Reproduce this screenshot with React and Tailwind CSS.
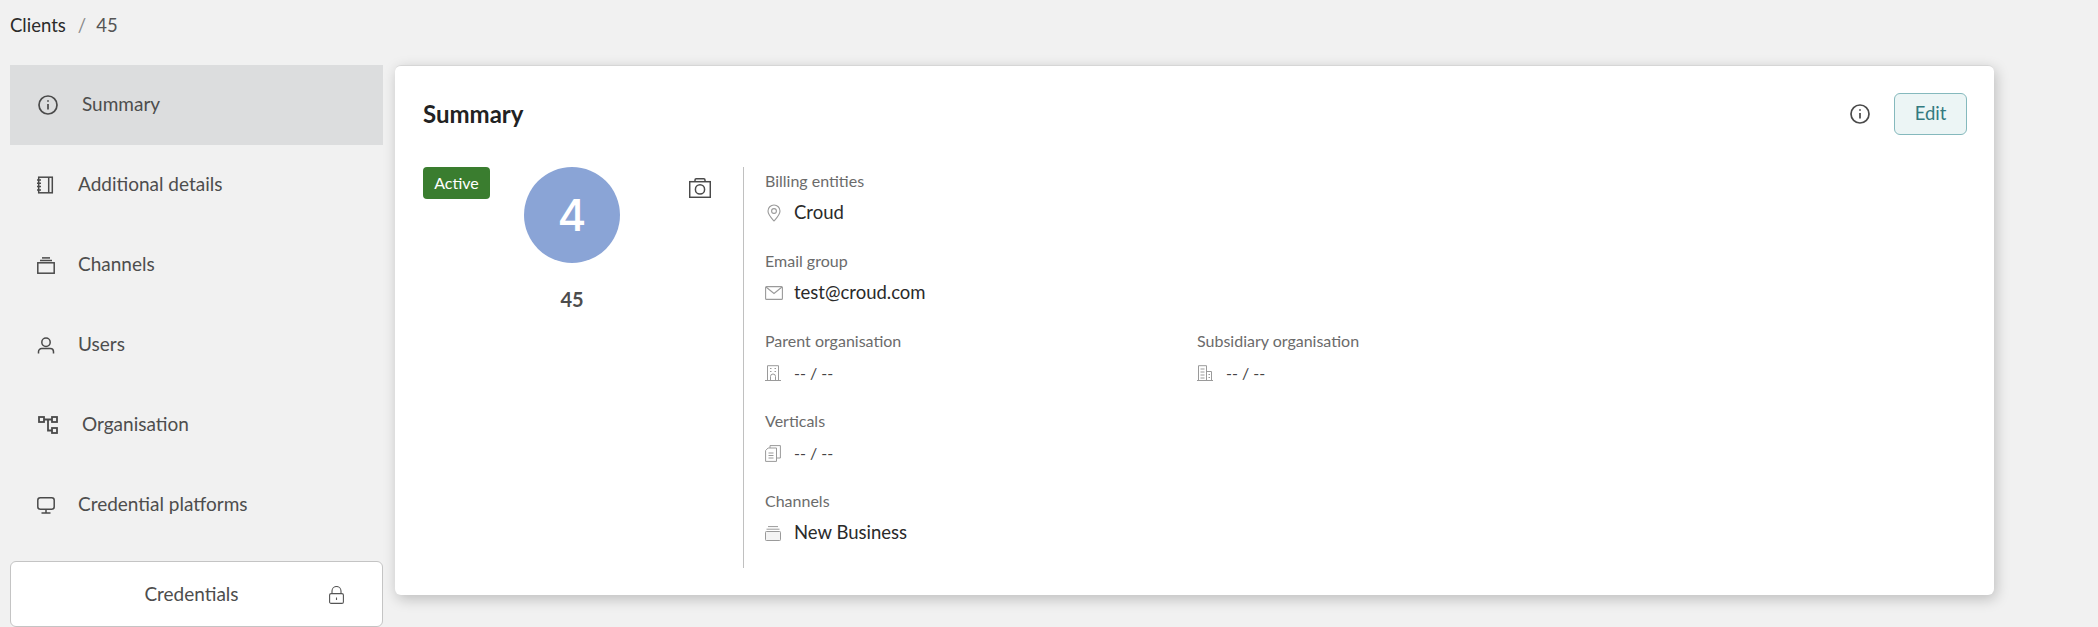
const Svg = ({ w, h, sw = 1.5, className = "text-[#4a4a4a]", children }) => (
  <svg width={w} height={h} viewBox={`0 0 ${w} ${h}`} fill="none" stroke="currentColor" strokeWidth={sw} className={`shrink-0 ${className}`}>
    {children}
  </svg>
);

const InfoIcon = () => (
  <Svg w={20} h={20} sw={1.7}>
    <circle cx="10" cy="10" r="9" />
    <path d="M10 9v5.5" />
    <path d="M10 5.2v1.6" />
  </Svg>
);

const NotebookIcon = () => (
  <Svg w={18} h={18}>
    <rect x="1.7" y="1.2" width="13.6" height="15.6" />
    <path d="M11.7 1.2v15.6" />
    <path d="M0 4h4M0 7.3h4M0 10.6h4M0 14h4" />
  </Svg>
);

const NavChannelsIcon = () => (
  <Svg w={18} h={17}>
    <rect x="0.8" y="5.8" width="16.4" height="10.4" />
    <path d="M3 3.5h12" />
    <path d="M5 0.9h8" />
  </Svg>
);

const UserIcon = () => (
  <Svg w={18} h={17}>
    <circle cx="9" cy="5.2" r="4.2" />
    <path d="M1.5 16.5v-1.8a3.2 3.2 0 0 1 3.2-3.2h8.6a3.2 3.2 0 0 1 3.2 3.2v1.8" />
  </Svg>
);

const OrgIcon = () => (
  <Svg w={20} h={18} sw={1.8}>
    <rect x="1" y="1" width="5" height="5" />
    <rect x="14" y="1" width="5" height="5" />
    <rect x="14" y="12" width="5" height="5" />
    <path d="M6 3.5h8M10 3.5v11h4" />
  </Svg>
);

const MonitorIcon = () => (
  <Svg w={18} h={17}>
    <rect x="0.8" y="0.8" width="16.4" height="11.4" rx="2.5" />
    <path d="M9 12.2v3.8M4.5 16h9" />
  </Svg>
);

const LockIcon = () => (
  <Svg w={15} h={18} sw={1.1} className="text-[#555]">
    <rect x="0.6" y="7.6" width="13.8" height="9.8" rx="1.5" />
    <path d="M3 7.6V5a4.5 4.5 0 0 1 9 0v2.6" />
    <path d="M7.5 11.5v2.5" />
  </Svg>
);

const CameraIcon = () => (
  <Svg w={22} h={20} sw={1.5}>
    <rect x="0.7" y="3.7" width="20.6" height="15.6" />
    <path d="M6 3.7V2a1.2 1.2 0 0 1 1.2-1.2h7.6A1.2 1.2 0 0 1 16 2v1.7" />
    <circle cx="11" cy="11.4" r="4.6" />
  </Svg>
);

const grey = "text-[#9a9a9a]";

const PinIcon = () => (
  <Svg w={18} h={18} sw={1.1} className={grey}>
    <path d="M9 17c-3-3.4-6-6.4-6-10a6 6 0 0 1 12 0c0 3.6-3 6.6-6 10z" />
    <circle cx="9" cy="7" r="2.4" />
  </Svg>
);

const MailIcon = () => (
  <Svg w={18} h={14} sw={1.1} className={grey}>
    <rect x="0.6" y="0.6" width="16.8" height="12.8" rx="1" />
    <path d="M1 1l8 6.5 8-6.5" />
  </Svg>
);

const BuildingIcon = () => (
  <Svg w={16} h={16} sw={1} className={grey}>
    <path d="M2.5 15.5V0.7h11v14.8" />
    <path d="M0 15.5h16" />
    <path d="M5.5 15.5v-4a2.5 2.5 0 0 1 5 0v4" />
    <path d="M5 3.5h1.5M9.5 3.5H11M5 6.5h1.5M9.5 6.5H11" />
  </Svg>
);

const OfficeIcon = () => (
  <Svg w={16} h={16} sw={1} className={grey}>
    <path d="M1.5 15.5V0.7h8v14.8" />
    <path d="M9.5 6.5h5v9" />
    <path d="M0 15.5h16" />
    <path d="M3.5 4h4M3.5 7h4M3.5 10h4M3.5 13h4M11.5 9.5h1.5M11.5 12.5h1.5" />
  </Svg>
);

const VerticalsIcon = () => (
  <Svg w={16} h={17} sw={1} className={grey}>
    <path d="M0.6 16.4V5.5l2.5-2.5h8.4v13.4z" />
    <path d="M5 3V0.6h10.4V13h-3.9" />
    <path d="M3.5 8h5M3.5 10.5h5M3.5 13h5" />
  </Svg>
);

const ChannelIcon = () => (
  <Svg w={16} h={15} sw={1} className={grey}>
    <rect x="0.5" y="5.5" width="15" height="9" rx="0.8" fill="#f4f4f4" />
    <path d="M1.5 3.2h13" />
    <path d="M3 0.6h10" />
  </Svg>
);

const navItems = [
  { label: "Summary", icon: <InfoIcon />, box: "w-[22px] pl-px", active: true },
  { label: "Additional details", icon: <NotebookIcon />, box: "w-[18px]" },
  { label: "Channels", icon: <NavChannelsIcon />, box: "w-[18px]" },
  { label: "Users", icon: <UserIcon />, box: "w-[18px]" },
  { label: "Organisation", icon: <OrgIcon />, box: "w-[22px] pl-px" },
  { label: "Credential platforms", icon: <MonitorIcon />, box: "w-[18px]" },
];

const Field = ({ label, icon, value, muted, className = "" }) => (
  <div className={`h-20 ${className}`}>
    <div className="text-[16px] leading-[24px] text-[#6b6b6b]">{label}</div>
    <div className="mt-1 flex h-8 items-center">
      <div className="flex w-[29px] shrink-0">{icon}</div>
      <span className={muted ? "text-[16px] text-[#444]" : "text-[18.5px] text-[#2a2a2a]"}>{value}</span>
    </div>
  </div>
);

export default function App() {
  return (
    <div className="min-h-[627px] overflow-hidden bg-[#f1f1f1] font-['Lato',sans-serif]">
      <div className="flex h-[65px] items-start pl-[10px] pt-[13px] text-[18.5px] leading-6">
        <span className="text-[#2b2b2b]">Clients</span>
        <span className="ml-3 text-[#888]">/</span>
        <span className="ml-[10px] text-[#555]">45</span>
      </div>

      <div className="flex pl-[10px]">
        <aside className="w-[373px] shrink-0">
          {navItems.map((item) => (
            <div key={item.label} className={`flex h-20 items-center gap-[23px] pl-[27px] text-[19px] text-[#4d4d4d] ${item.active ? "bg-[#dcddde]" : ""}`}>
              <div className={`flex shrink-0 ${item.box}`}>{item.icon}</div>
              <span className="mb-[2px]">{item.label}</span>
            </div>
          ))}
          <div className="relative mt-4 flex h-[66px] items-center justify-center rounded-md border border-[#c4c4c4] bg-white pr-[10px] text-[19px] text-[#4d4d4d]">
            <span>Credentials</span>
            <div className="absolute right-[38px] top-[24px]">
              <LockIcon />
            </div>
          </div>
        </aside>

        <main className="ml-3 h-[530px] w-[1599px] rounded-md border-t border-[#d6d6d6] bg-white pl-7 pr-[27px] shadow-[2px_4px_14px_rgba(0,0,0,0.22)]">
          <div className="flex h-[101px] items-center justify-between pb-[5px]">
            <h1 className="text-[24px] font-bold text-[#222]">Summary</h1>
            <div className="flex items-center gap-6">
              <InfoIcon />
              <button className="h-[42px] w-[73px] rounded-md border border-[#85b9bd] bg-[#ecf5f5] text-[18.5px] text-[#337a80]">Edit</button>
            </div>
          </div>

          <div className="flex">
            <div className="flex h-[401px] w-[321px] shrink-0 items-start border-r border-[#c0c0c0]">
              <span className="flex h-8 w-[67px] items-center justify-center rounded bg-[#3a7d2f] text-[16px] text-white">Active</span>
              <div className="ml-[34px] flex w-24 flex-col items-center">
                <div className="flex size-24 items-center justify-center rounded-full bg-[#8aa4d6] font-['Inter',sans-serif] text-[44px] font-medium text-white">4</div>
                <div className="mt-[21px] text-[20px] font-bold text-[#4d4d4d]">45</div>
              </div>
              <div className="ml-[69px] mt-[11px] flex">
                <CameraIcon />
              </div>
            </div>

            <div className="pl-[21px] pt-[2px]">
              <Field label="Billing entities" icon={<PinIcon />} value="Croud" />
              <Field label="Email group" icon={<MailIcon />} value="test@croud.com" />
              <div className="flex">
                <Field label="Parent organisation" icon={<BuildingIcon />} value="-- / --" muted className="w-[432px]" />
                <Field label="Subsidiary organisation" icon={<OfficeIcon />} value="-- / --" muted />
              </div>
              <Field label="Verticals" icon={<VerticalsIcon />} value="-- / --" muted />
              <Field label="Channels" icon={<ChannelIcon />} value="New Business" />
            </div>
          </div>
        </main>
      </div>
    </div>
  );
}
